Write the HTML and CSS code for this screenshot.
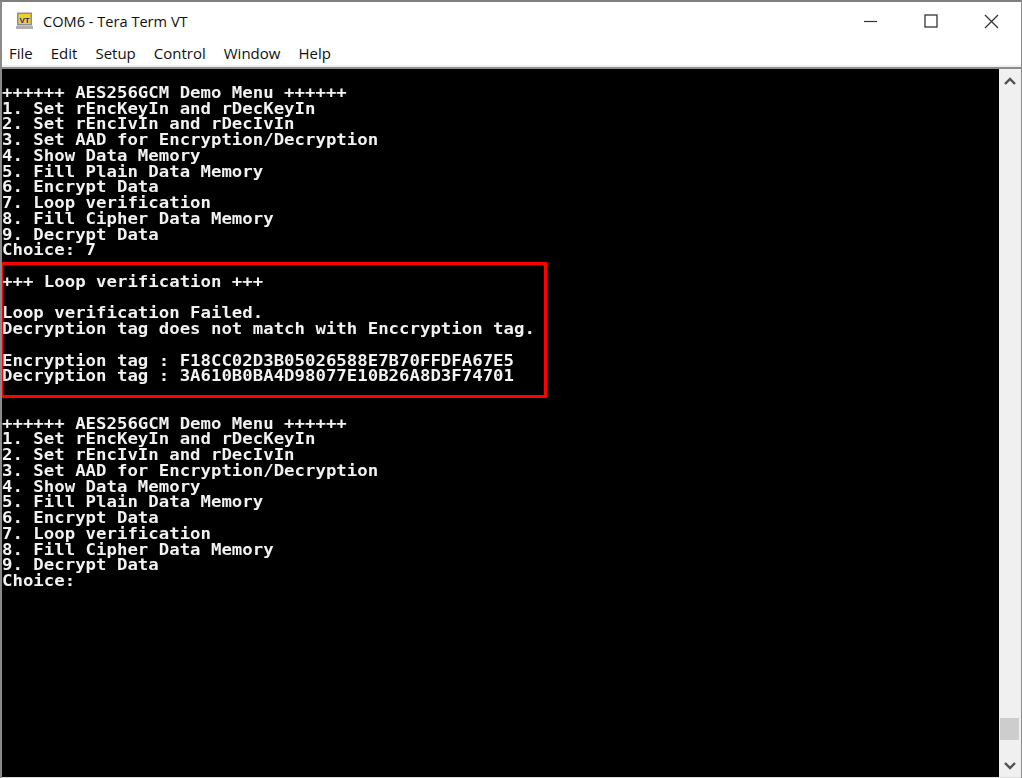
FILE: index.html
```html
<!DOCTYPE html>
<html lang="en">
<head>
<meta charset="utf-8">
<title>COM6 - Tera Term VT</title>
<link rel="stylesheet" href="styles.css">
</head>
<body>
<div class="window">
  <header class="titlebar">
    <div class="title-left">
      <svg class="app-icon" width="18" height="18" viewBox="0 0 18 18">
        <rect x="1" y="0.5" width="15" height="13" fill="#8f8f8f"/>
        <rect x="2.5" y="2" width="12" height="10" fill="#f0d020"/>
        <rect x="0" y="14" width="17" height="3" fill="#b0b0b0"/>
        <text class="app-icon-text" x="8.5" y="10.5">VT</text>
      </svg>
      <span class="title-text">COM6 - Tera Term VT</span>
    </div>
    <div class="controls">
      <button class="ctl"><svg width="14" height="14" viewBox="0 0 14 14"><path d="M0 7.5H13" stroke="#333" stroke-width="1.2"/></svg></button>
      <button class="ctl"><svg width="14" height="14" viewBox="0 0 14 14"><rect x="1" y="1" width="12" height="12" fill="none" stroke="#333" stroke-width="1.3"/></svg></button>
      <button class="ctl"><svg width="15" height="15" viewBox="0 0 15 15"><path d="M1 1L14 14M14 1L1 14" stroke="#333" stroke-width="1.3"/></svg></button>
    </div>
  </header>
  <nav class="menubar">
    <span>File</span><span>Edit</span><span>Setup</span><span>Control</span><span>Window</span><span>Help</span>
  </nav>
  <main class="client">
    <section class="terminal">
<pre class="screen">

++++++ AES256GCM Demo Menu ++++++
1. Set rEncKeyIn and rDecKeyIn
2. Set rEncIvIn and rDecIvIn
3. Set AAD for Encryption/Decryption
4. Show Data Memory
5. Fill Plain Data Memory
6. Encrypt Data
7. Loop verification
8. Fill Cipher Data Memory
9. Decrypt Data
Choice: 7

+++ Loop verification +++

Loop verification Failed.
Decryption tag does not match with Enccryption tag.

Encryption tag : F18CC02D3B05026588E7B70FFDFA67E5
Decryption tag : 3A610B0BA4D98077E10B26A8D3F74701


++++++ AES256GCM Demo Menu ++++++
1. Set rEncKeyIn and rDecKeyIn
2. Set rEncIvIn and rDecIvIn
3. Set AAD for Encryption/Decryption
4. Show Data Memory
5. Fill Plain Data Memory
6. Encrypt Data
7. Loop verification
8. Fill Cipher Data Memory
9. Decrypt Data
Choice:</pre>
      <div class="highlight"></div>
    </section>
    <aside class="scrollbar">
      <svg width="14" height="10" viewBox="0 0 14 10"><path d="M2 8L7 3L12 8" fill="none" stroke="#505050" stroke-width="2.4"/></svg>
      <div class="track"><div class="thumb"></div></div>
      <svg width="14" height="10" viewBox="0 0 14 10"><path d="M2 2L7 7L12 2" fill="none" stroke="#505050" stroke-width="2.4"/></svg>
    </aside>
  </main>
</div>
</body>
</html>
```
FILE: styles.css
```css
* { box-sizing: border-box; }
html, body { margin: 0; padding: 0; background: #fff; overflow: hidden; }
.window {
  width: 1022px;
  height: 778px;
  display: flex;
  flex-direction: column;
  border-top: 2px solid #7f7f7f;
  border-left: 2px solid #8a8a8a;
  border-right: 1px solid #8a8a8a;
  background: #fff;
  font-family: "Open Sans", "Liberation Sans", sans-serif;
  color: #111;
}
.titlebar {
  height: 38px;
  display: flex;
  justify-content: space-between;
  align-items: center;
  flex: none;
}
.title-left { display: flex; align-items: center; padding-left: 14px; gap: 9px; }
.app-icon { display: block; }
.app-icon-text { font: bold 8px "Liberation Sans", sans-serif; fill: #1a2a9a; text-anchor: middle; }
.title-text { font-size: 14.6px; }
.controls { display: flex; }
.ctl {
  width: 60px;
  height: 38px;
  border: 0;
  background: none;
  padding: 0;
  display: flex;
  align-items: center;
  justify-content: center;
}
.menubar {
  height: 25px;
  flex: none;
  display: flex;
  gap: 18px;
  padding-left: 7px;
  padding-top: 1px;
  font-size: 15px;
  line-height: 24px;
  background: #fff;
}
.client {
  flex: 1;
  min-height: 0;
  display: flex;
  border-top: 2px solid #f0f0f0;
  border-bottom: 1px solid #dcdcdc;
  box-shadow: inset 0 2px 0 #8c8c8c;
  background: #000;
}
.terminal {
  position: relative;
  flex: 1;
  min-width: 0;
  overflow: hidden;
  background: #000;
  margin-top: 2px;
}
.screen {
  margin: 0;
  padding: 1px 0 0;
  color: #f2f2f2;
  font-family: "DejaVu Sans Mono", monospace;
  font-weight: bold;
  font-size: 15px;
  line-height: 15.75px;
  transform: scaleX(1.157);
  transform-origin: 0 0;
  filter: blur(0.3px);
}
.highlight {
  position: absolute;
  left: -2px;
  top: 193px;
  width: 547px;
  height: 136px;
  border: 3px solid #ff0000;
}
.scrollbar {
  flex: none;
  width: 22px;
  margin-top: 2px;
  background: #f0f0f0;
  display: flex;
  flex-direction: column;
  align-items: center;
  padding: 7px 1px 6px 0;
}
.track { flex: 1; width: 100%; display: flex; flex-direction: column; justify-content: flex-end; padding: 0 1px 21px; }
.thumb { height: 22px; background: #cdcdcd; }
```
